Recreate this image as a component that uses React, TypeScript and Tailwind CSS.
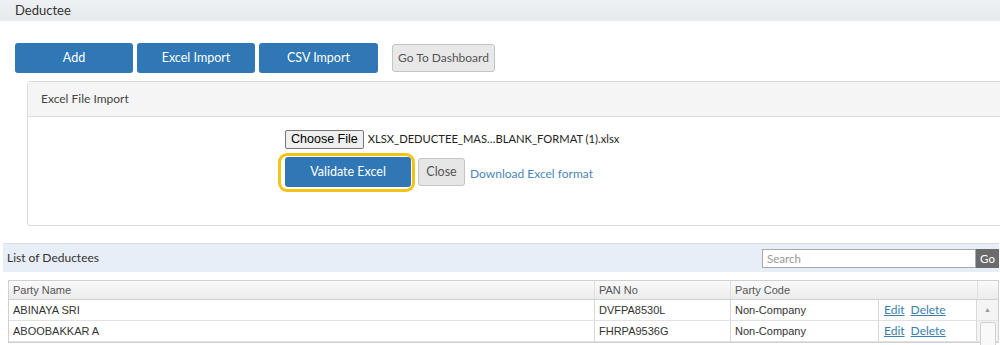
import React from "react";

const rows = [
  { name: "ABINAYA SRI", pan: "DVFPA8530L", code: "Non-Company" },
  { name: "ABOOBAKKAR A", pan: "FHRPA9536G", code: "Non-Company" },
];

export default function App() {
  return (
    <div className="w-[1000px] h-[345px] overflow-hidden bg-white font-['Lato',sans-serif] text-[#333]">
      <div className="h-[21px] bg-gradient-to-b from-[#eef1f3] to-[#e7eaec] pl-[15px] text-[13px] leading-[21px] text-[#333]">
        Deductee
      </div>

      <div className="flex gap-[4px] pl-[15px] pt-[22px]">
        <button className="w-[118px] h-[30px] rounded-[3px] bg-[#2f77b5] text-white text-[12.5px]">Add</button>
        <button className="w-[118px] h-[30px] rounded-[3px] bg-[#2f77b5] text-white text-[12.5px]">Excel Import</button>
        <button className="w-[119px] h-[30px] rounded-[3px] bg-[#2f77b5] text-white text-[12.5px]">CSV Import</button>
        <button className="ml-[10px] mt-[1px] w-[103px] h-[28px] rounded-[3px] border border-[#c4c4c4] bg-[#e8e8e8] text-[#555] text-[12px]">
          Go To Dashboard
        </button>
      </div>

      <div className="ml-[27px] mt-[8px] w-[990px] rounded-[3px] border border-[#dcdcdc]">
        <div className="h-[35px] bg-[#f5f5f5] border-b border-[#dcdcdc] pl-[13px] text-[12px] leading-[34px] text-[#444]">
          Excel File Import
        </div>
        <div className="h-[108px] pl-[257px] pt-[13px]">
          <div className="flex items-center gap-[4px]">
            <span className="h-[19px] px-[5px] border border-[#767676] rounded-[2px] bg-[#efefef] font-['Liberation_Sans',sans-serif] text-[12.5px] leading-[17px] text-black">
              Choose File
            </span>
            <span className="text-[11.2px] text-[#222]">XLSX_DEDUCTEE_MAS…BLANK_FORMAT (1).xlsx</span>
          </div>
          <div className="mt-[8px] flex items-end">
            <div className="relative">
              <button className="w-[126px] h-[30px] rounded-[3px] bg-[#2f77b5] text-white text-[12.5px]">Validate Excel</button>
              <span className="absolute -left-[7px] -right-[4px] -top-[4px] -bottom-[5px] rounded-[9px] border-[3px] border-[#f4c414]" />
            </div>
            <button className="ml-[7px] mb-[1px] w-[47px] h-[28px] rounded-[3px] border border-[#c4c4c4] bg-[#e6e6e6] text-[#555] text-[12.5px]">
              Close
            </button>
            <span className="ml-[5px] mb-[4px] text-[12px] text-[#4a86b8]">Download Excel format</span>
          </div>
        </div>
      </div>

      <div className="ml-[3px] mt-[17px] w-[996px]">
        <div className="h-[29px] flex items-center justify-between bg-[#e7eef7] border-t border-[#d6dde7] pl-[4px]">
          <span className="text-[12px] text-[#333]">List of Deductees</span>
          <div className="flex items-center">
            <div className="w-[214px] h-[19px] border border-[#a9a9a9] bg-white pl-[4px] text-[11.5px] leading-[17px] text-[#999]">
              Search
            </div>
            <div className="w-[23px] h-[19px] bg-[#6b6b6b] text-white text-[11.5px] leading-[19px] text-center">Go</div>
          </div>
        </div>

        <div className="mt-[8px] ml-[5px] w-[991px] border border-[#d0d0d0] font-['Liberation_Sans',sans-serif] text-[11px] text-[#333]">
          <div className="flex h-[19px] bg-gradient-to-b from-[#fafafa] to-[#ececec] border-b border-[#d0d0d0] text-[#555] leading-[18px]">
            <div className="w-[585px] pl-[4px]">Party Name</div>
            <div className="w-[136px] pl-[4px] border-l border-[#e0e0e0]">PAN No</div>
            <div className="w-[148px] pl-[4px] border-l border-[#e0e0e0]">Party Code</div>
            <div className="w-[99px]" />
            <div className="flex-1 border-l border-[#e0e0e0]" />
          </div>
          {rows.map((r, i) => (
            <div key={r.pan} className="flex h-[21px] border-b border-[#e2e2e2] leading-[20px]">
              <div className="w-[585px] pl-[4px]">{r.name}</div>
              <div className="w-[136px] pl-[4px] border-l border-[#d8d8d8]">{r.pan}</div>
              <div className="w-[148px] pl-[4px] border-l border-[#d8d8d8]">{r.code}</div>
              <div className="w-[99px] pl-[5px] border-l border-[#d8d8d8] border-r font-['Lato',sans-serif] text-[12px] text-[#3a7fae]">
                <span className="underline">Edit</span>
                <span className="underline ml-[6px]">Delete</span>
              </div>
              <div className="flex-1 bg-[#f4f4f4] flex justify-center">
                {i === 0 ? (
                  <span className="text-[7px] leading-[20px] text-[#999]">▲</span>
                ) : (
                  <span className="mt-[1px] w-[16px] h-[30px] border border-[#cfcfcf] rounded-[2px] bg-[#f9f9f9]" />
                )}
              </div>
            </div>
          ))}
        </div>
      </div>
    </div>
  );
}
